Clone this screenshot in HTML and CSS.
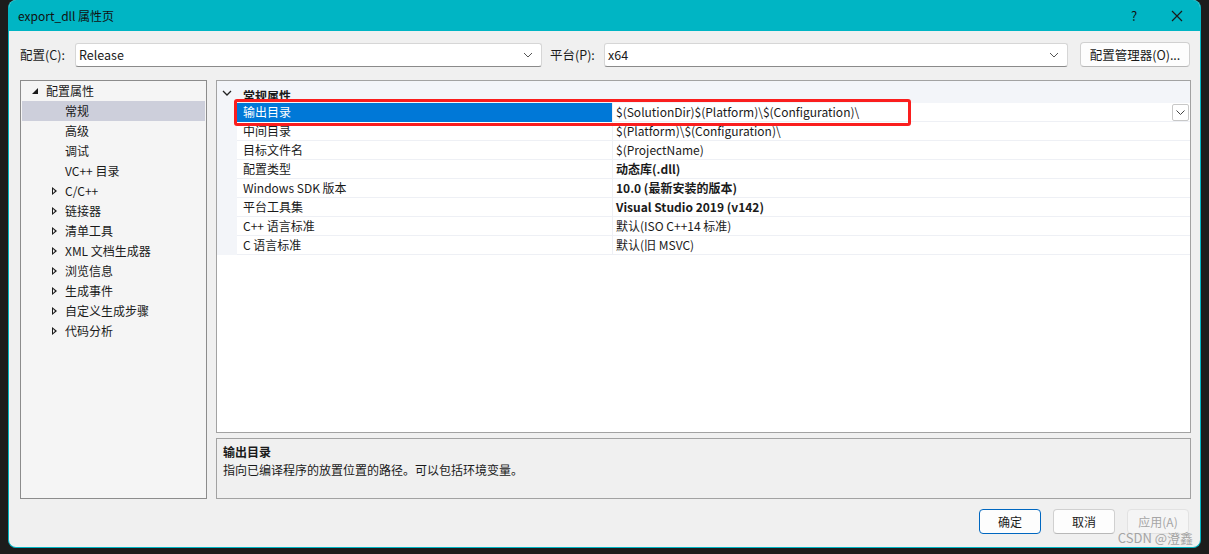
FILE: index.html
```html
<!DOCTYPE html>
<html>
<head>
<meta charset="utf-8">
<link rel="stylesheet" href="styles.css">
</head>
<body>
<div class="dialog">
  <div class="titlebar">
    <span class="title">export_dll 属性页</span>
    <span class="help">?</span>
    <span class="close"><svg width="12" height="12" viewBox="0 0 12 12"><path d="M1 1L11 11M11 1L1 11" stroke="#1a1a1a" stroke-width="1.2"/></svg></span>
  </div>
  <div class="toolbar">
    <span class="lbl lbl1">配置(C):</span>
    <div class="combo combo1"><span>Release</span><svg class="chev" width="10" height="6" viewBox="0 0 10 6"><path d="M1 1L5 5L9 1" fill="none" stroke="#555" stroke-width="1"/></svg></div>
    <span class="lbl lbl2">平台(P):</span>
    <div class="combo combo2"><span>x64</span><svg class="chev" width="10" height="6" viewBox="0 0 10 6"><path d="M1 1L5 5L9 1" fill="none" stroke="#555" stroke-width="1"/></svg></div>
    <button class="btn mgr">配置管理器(O)...</button>
  </div>
  <div class="main">
    <div class="tree">
      <div class="ti top"><span class="exp"></span>配置属性</div>
      <div class="ti child sel">常规</div>
      <div class="ti child">高级</div>
      <div class="ti child">调试</div>
      <div class="ti child">VC++ 目录</div>
      <div class="ti coll"><span class="tri"></span>C/C++</div>
      <div class="ti coll"><span class="tri"></span>链接器</div>
      <div class="ti coll"><span class="tri"></span>清单工具</div>
      <div class="ti coll"><span class="tri"></span>XML 文档生成器</div>
      <div class="ti coll"><span class="tri"></span>浏览信息</div>
      <div class="ti coll"><span class="tri"></span>生成事件</div>
      <div class="ti coll"><span class="tri"></span>自定义生成步骤</div>
      <div class="ti coll"><span class="tri"></span>代码分析</div>
    </div>
    <div class="right">
      <div class="grid">
        <div class="ghead">
          <span class="gmargin"><svg width="10" height="6" viewBox="0 0 10 6"><path d="M1 1L5 5L9 1" fill="none" stroke="#222" stroke-width="1.3"/></svg></span>
          <span class="gtitle">常规属性</span>
        </div>
        <div class="grow selrow"><span class="gmargin"></span><span class="gname">输出目录</span><span class="gval">$(SolutionDir)$(Platform)\$(Configuration)\</span><span class="ddbtn"><svg width="9" height="5" viewBox="0 0 9 5"><path d="M0.5 0.5L4.5 4.5L8.5 0.5" fill="none" stroke="#444" stroke-width="1"/></svg></span></div>
        <div class="grow"><span class="gmargin"></span><span class="gname">中间目录</span><span class="gval">$(Platform)\$(Configuration)\</span></div>
        <div class="grow"><span class="gmargin"></span><span class="gname">目标文件名</span><span class="gval">$(ProjectName)</span></div>
        <div class="grow"><span class="gmargin"></span><span class="gname">配置类型</span><span class="gval b">动态库(.dll)</span></div>
        <div class="grow"><span class="gmargin"></span><span class="gname">Windows SDK 版本</span><span class="gval b">10.0 (最新安装的版本)</span></div>
        <div class="grow"><span class="gmargin"></span><span class="gname">平台工具集</span><span class="gval b">Visual Studio 2019 (v142)</span></div>
        <div class="grow"><span class="gmargin"></span><span class="gname">C++ 语言标准</span><span class="gval">默认(ISO C++14 标准)</span></div>
        <div class="grow"><span class="gmargin"></span><span class="gname">C 语言标准</span><span class="gval">默认(旧 MSVC)</span></div>
        <div class="redbox"></div>
      </div>
      <div class="desc">
        <div class="dtitle">输出目录</div>
        <div class="dtext">指向已编译程序的放置位置的路径。可以包括环境变量。</div>
      </div>
    </div>
  </div>
  <div class="buttons">
    <button class="btn ok">确定</button>
    <button class="btn">取消</button>
    <button class="btn dis">应用(A)</button>
  </div>
  <div class="watermark">CSDN @澄鑫</div>
</div>
</body>
</html>
```
FILE: styles.css
```css
html, body { margin: 0; padding: 0; }
body {
  background: #1c1c1c;
  font-family: "Noto Sans CJK SC", "Noto Sans", sans-serif;
  font-size: 12px;
  color: #1a1a1a;
  width: 1209px;
  height: 554px;
  overflow: hidden;
}
.dialog {
  margin-left: 8px;
  width: 1193px;
  height: 548px;
  box-sizing: border-box;
  border: 1px solid #00b4c3;
  border-top: none;
  border-radius: 8px;
  background: #f0f0f0;
  overflow: hidden;
  position: relative;
  display: flex;
  flex-direction: column;
}
.titlebar {
  height: 31px;
  background: #00b5c4;
  display: flex;
  align-items: center;
  padding-left: 9px;
  flex-shrink: 0;
}
.title { flex: 1; font-size: 12px; color: #111; }
.help { width: 12px; font-size: 13px; margin-right: 28px; color: #111; }
.close { width: 12px; height: 12px; margin-right: 17px; display: flex; }
.toolbar {
  display: flex;
  align-items: center;
  height: 25px;
  margin-top: 11px;
  padding-left: 11px;
}
.lbl { flex-shrink: 0; font-size: 12.5px; }
.lbl1 { width: 55px; }
.lbl2 { width: 54px; margin-left: 8px; }
.combo {
  height: 24px;
  box-sizing: border-box;
  background: #fff;
  border: 1px solid #d6d6d6;
  border-bottom-color: #8a8a8a;
  border-radius: 3px;
  display: flex;
  align-items: center;
  padding: 0 8px 0 3px;
  justify-content: space-between;
  font-size: 12.5px;
}
.combo1 { width: 467px; }
.combo2 { width: 464px; }
.btn {
  font-family: inherit;
  font-size: 12px;
  color: #1a1a1a;
  background: #fdfdfd;
  border: 1px solid #d0d0d0;
  border-bottom-color: #b8b8b8;
  border-radius: 4px;
  height: 25px;
  padding: 0;
}
.mgr { width: 110px; margin-left: 12px; font-size: 12.5px; }
.main {
  display: flex;
  margin-top: 13px;
  padding-left: 11px;
  height: 419px;
}
.tree {
  width: 187px;
  box-sizing: border-box;
  border: 1px solid #8c8c8c;
  background: #f5f5f5;
  padding: 0 1px;
}
.ti {
  height: 20px;
  line-height: 20px;
  position: relative;
  white-space: nowrap;
}
.ti.top { padding-left: 24px; }
.ti.child, .ti.coll { padding-left: 43px; }
.ti.sel { background: #cdcfdb; }
.exp {
  position: absolute;
  left: 10px;
  top: 7px;
  width: 0; height: 0;
  border-left: 6px solid transparent;
  border-bottom: 6px solid #1a1a1a;
}
.tri {
  position: absolute;
  left: 30px;
  top: 6px;
  width: 5px;
  height: 9px;
}
.tri::before {
  content: "";
  position: absolute;
  left: 0; top: 0;
  border-top: 4.5px solid transparent;
  border-bottom: 4.5px solid transparent;
  border-left: 5px solid #1a1a1a;
}
.tri::after {
  content: "";
  position: absolute;
  left: 1px; top: 2px;
  border-top: 2.5px solid transparent;
  border-bottom: 2.5px solid transparent;
  border-left: 2.5px solid #f5f5f5;
}
.right {
  margin-left: 9px;
  width: 975px;
  display: flex;
  flex-direction: column;
}
.grid {
  position: relative;
  height: 354px;
  box-sizing: border-box;
  border: 1px solid #a2a2a2;
  background: #fff;
}
.ghead {
  height: 22px;
  display: flex;
  align-items: center;
  background: #f3f5f9;
}
.ghead .gmargin { display: flex; justify-content: center; padding-top: 1px; }
.gtitle { font-weight: bold; padding-left: 6px; padding-top: 6px; }
.gmargin { width: 20px; flex-shrink: 0; align-self: stretch; align-items: center; }
.grow {
  height: 19px;
  display: flex;
  position: relative;
}
.grow .gmargin { background: #f3f5f9; }
.gname {
  width: 369px;
  padding-left: 6px;
  line-height: 18px;
  border-bottom: 1px solid #eef0f5;
  white-space: nowrap;
}
.gval {
  flex: 1;
  padding-left: 3px;
  line-height: 18px;
  border-left: 1px solid #eef0f5;
  border-bottom: 1px solid #eef0f5;
  white-space: nowrap;
}
.gval.b { font-weight: bold; }
.selrow .gname { background: #0078d7; color: #fff; border-bottom-color: #0078d7; }
.ddbtn {
  position: absolute;
  right: 1px;
  top: 1px;
  width: 15px;
  height: 15px;
  border: 1px solid #c8c8c8;
  border-radius: 2px;
  background: #fff;
  display: flex;
  align-items: center;
  justify-content: center;
}
.redbox {
  position: absolute;
  left: 17px;
  top: 18px;
  width: 677px;
  height: 27px;
  box-sizing: border-box;
  border: 3px solid #fa1e1e;
  border-radius: 3px;
}
.desc {
  margin-top: 5px;
  height: 61px;
  box-sizing: border-box;
  border: 1px solid #a2a2a2;
  background: #f0f0f0;
  padding: 4px 6px;
  line-height: 18px;
}
.dtitle { font-weight: bold; }
.buttons {
  display: flex;
  justify-content: flex-end;
  gap: 12px;
  margin-top: 10px;
  padding-right: 11px;
}
.buttons .btn { width: 62px; }
.btn.ok { border: 1px solid #0067c0; }
.btn.dis { background: #f5f5f5; color: #a6a6a6; border-color: #e2e2e2; }
.watermark {
  position: absolute;
  right: 7px;
  bottom: 0;
  color: #a4a4a4;
  font-size: 13px;
  line-height: 18px;
}
```
